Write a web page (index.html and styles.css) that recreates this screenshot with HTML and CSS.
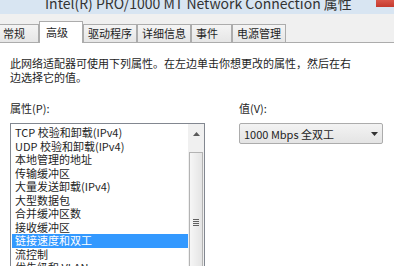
FILE: index.html
```html
<!DOCTYPE html>
<html lang="zh-CN">
<head>
  <meta charset="UTF-8">
  <title>Intel(R) PRO/1000 MT Network Connection 属性</title>
  <link rel="stylesheet" href="styles.css">
</head>
<body>

<div class="window">
  <div class="titlebar">
    <span class="title">Intel(R) PRO/1000 MT Network Connection 属性</span>
    <span class="close"></span>
  </div>

  <!-- Abas -->
  <div class="tabs">
    <span class="tab">常规</span>
    <span class="tab active">高级</span>
    <span class="tab">驱动程序</span>
    <span class="tab">详细信息</span>
    <span class="tab">事件</span>
    <span class="tab">电源管理</span>
  </div>

  <div class="panel">
    <p class="desc">此网络适配器可使用下列属性。在左边单击你想更改的属性，然后在右<br>边选择它的值。</p>

    <div class="fields">
      <div class="col-left">
        <label class="field-label">属性(P):</label>
        <div class="listbox">
          <ul class="items">
            <li>TCP 校验和卸载(IPv4)</li>
            <li>UDP 校验和卸载(IPv4)</li>
            <li>本地管理的地址</li>
            <li>传输缓冲区</li>
            <li>大量发送卸载(IPv4)</li>
            <li>大型数据包</li>
            <li>合并缓冲区数</li>
            <li>接收缓冲区</li>
            <li class="selected">链接速度和双工</li>
            <li>流控制</li>
            <li>优先级和 VLAN</li>
            <li>中断节流率</li>
          </ul>
          <div class="scrollbar">
            <div class="scroll-up">
              <svg width="7" height="4" viewBox="0 0 7 4"><polygon points="0,4 3.5,0 7,4" fill="#5a5a5a"/></svg>
            </div>
            <div class="thumb">
              <span class="grip"></span>
            </div>
          </div>
        </div>
      </div>

      <div class="col-right">
        <label class="field-label">值(V):</label>
        <div class="select">
          <span>1000 Mbps 全双工</span>
          <svg width="7" height="4" viewBox="0 0 7 4"><polygon points="0,0 7,0 3.5,4" fill="#333"/></svg>
        </div>
      </div>
    </div>
  </div>
</div>

</body>
</html>
```

FILE: styles.css
```css
body {
  margin: 0;
  background-color: #f0f0f0;
  font-family: "Noto Sans CJK SC", "Noto Sans", sans-serif;
  font-size: 11px;
  color: #1e1e1e;
  overflow: hidden;
}

.window {
  width: 394px;
  height: 266px;
  overflow: hidden;
}

/* Titlebar */
.titlebar {
  height: 14px;
  background-color: #d8e5f2;
  display: flex;
  overflow: hidden;
}
.title {
  font-size: 14px;
  line-height: 14px;
  margin: -4px 0 0 45px;
  color: #333;
  white-space: nowrap;
}
.close {
  margin-left: auto;
  width: 18px;
  height: 7px;
  background: linear-gradient(#d9564a, #c4392d);
}

/* Tabs */
.tabs {
  height: 28px;
  display: flex;
  align-items: flex-end;
  margin-left: -2px;
  border-bottom: 1px solid #acacac;
}
.tab {
  box-sizing: border-box;
  min-width: 41px;
  height: 18px;
  padding: 0 4px;
  border: 1px solid #acacac;
  border-bottom: 0;
  background: linear-gradient(#f4f4f4, #e6e6e6);
  line-height: 17px;
  white-space: nowrap;
}
.tab.active {
  min-width: 44px;
  height: 22px;
  padding-left: 6px;
  margin-bottom: -1px;
  background: #fff;
  line-height: 20px;
}

/* Panel */
.panel {
  background-color: #fff;
  padding: 13px 0 0 10px;
  height: 240px;
}
.desc {
  margin: 0;
  line-height: 14px;
}
.fields {
  display: flex;
  gap: 34px;
  margin-top: 17px;
}
.col-left {
  width: 195px;
}
.col-right {
  width: 144px;
}
.field-label {
  display: block;
  line-height: 14px;
  margin-bottom: 8px;
}

/* Listbox */
.listbox {
  display: flex;
  height: 170px;
  border: 1px solid #828790;
}
.items {
  flex: 1;
  list-style: none;
  margin: 0;
  padding: 2px 0 0 1px;
}
.items li {
  line-height: 13.5px;
  padding-left: 3px;
  white-space: nowrap;
}
.items li.selected {
  background-color: #3399ff;
  color: #fff;
}
.scrollbar {
  width: 16px;
  background-color: #f0f0f0;
  display: flex;
  flex-direction: column;
  align-items: center;
}
.scroll-up {
  height: 20px;
  display: flex;
  align-items: center;
}
.thumb {
  margin-top: 8px;
  box-sizing: border-box;
  width: 14px;
  height: 146px;
  border: 1px solid #b3b3b3;
  background: linear-gradient(to right, #f6f6f6, #e4e4e4);
  display: flex;
  align-items: center;
  justify-content: center;
}
.grip {
  width: 6px;
  height: 7px;
  background: repeating-linear-gradient(#606060 0 1px, transparent 1px 2px);
}

/* Dropdown */
.select {
  box-sizing: border-box;
  height: 21px;
  border: 1px solid #acacac;
  border-radius: 2px;
  background: linear-gradient(#f3f3f3, #e4e4e4);
  display: flex;
  align-items: center;
  justify-content: space-between;
  padding: 0 4px;
}
```
